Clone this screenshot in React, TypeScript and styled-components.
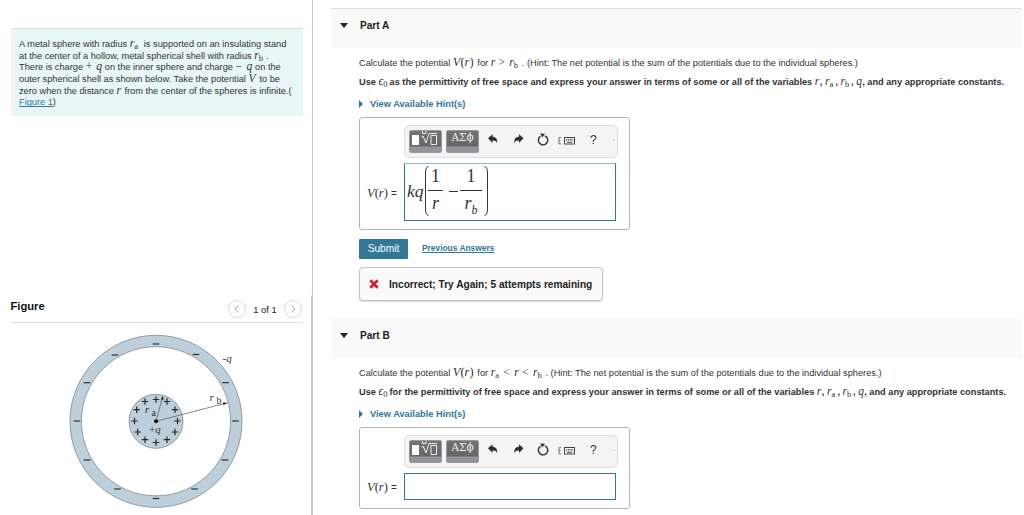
import React from "react";
import styled, { createGlobalStyle } from "styled-components";

const SERIF = '"Liberation Serif", serif';

const MINUSES = [
  [156, 54],
  [196, 64.5],
  [115, 65],
  [87, 92.7],
  [225.5, 92.7],
  [77, 131],
  [235.5, 131],
  [87, 170],
  [225, 170],
  [117.5, 199],
  [194.5, 199],
  [156, 208.5]
];

const PLUSES = [
  [156, 109.5],
  [145, 111.5],
  [167, 111.5],
  [136.7, 119.7],
  [175, 119.7],
  [134.5, 131],
  [177.5, 131],
  [137.7, 142],
  [175, 142],
  [145, 149.7],
  [167, 149.7],
  [156, 152.5]
];

const SphereFigure = () => (
  <svg width="312" height="192" viewBox="0 323 312 192">
    <g transform="translate(0 290)">
      <circle cx="156" cy="131.3" r="80.3" fill="none" stroke="#bccfdb" strokeWidth="11.6" />
      <circle cx="156" cy="131.3" r="86" fill="none" stroke="#8b9399" strokeWidth="0.9" />
      <circle cx="156" cy="131.3" r="74.6" fill="none" stroke="#8b9399" strokeWidth="0.9" />
      <circle cx="156" cy="131.3" r="27" fill="#bccfdb" stroke="#8b9399" strokeWidth="0.9" />
      {MINUSES.map(([x, y]) => (
        <path key={`${x}-${y}`} d={`M${x - 3.3} ${y}h6.6`} stroke="#2b2f33" strokeWidth="1.2" />
      ))}
      {PLUSES.map(([x, y]) => (
        <path
          key={`${x}-${y}`}
          d={`M${x - 3.2} ${y}h6.4M${x} ${y - 3.2}v6.4`}
          stroke="#22272b"
          strokeWidth="1.2"
        />
      ))}
      <path d="M156 131.3L224 113.6M156 131.3L162 109" stroke="#555" strokeWidth="0.7" />
      <path d="M228 112.7l-4.5 2.3-.6-2.6zM163 105.8l.6 4.2-2.8-.8z" fill="#222" />
      <circle cx="156" cy="131.3" r="2" fill="#111" />
      <g fontFamily={SERIF} fontSize="11" fill="#333">
        <text x="222.5" y="72" fontStyle="italic">-q</text>
        <text x="209.5" y="111" fontStyle="italic">r</text>
        <text x="216.5" y="113.5" fontSize="10">b</text>
        <text x="145" y="123" fontStyle="italic">r</text>
        <text x="151.5" y="126.3" fontSize="10">a</text>
        <text x="149" y="143">+<tspan fontStyle="italic">q</tspan></text>
      </g>
    </g>
  </svg>
);

const Toolbar = () => (
  <SToolbar>
    <SPaletteButton>
      <svg width="31" height="20" viewBox="0 0 31 20">
        <rect x="2" y="4" width="7" height="10" fill="#fff" />
        <path
          d="M11.5 6l1.5-1 3 7L19 2.5h8M12.5 0v2.500h3.500V0M21 4.500h5.500v9H21z"
          fill="none"
          stroke="#eee"
          strokeWidth="1"
        />
      </svg>
    </SPaletteButton>
    <SPaletteButton>
      <SGreek>ΑΣϕ</SGreek>
    </SPaletteButton>
    <STools width="136" height="28" viewBox="482 126 136 28">
      <path
        d="M488 138.2l4.5-4v2.5c3.2.1 5 2 4.6 6.5-.8-2.1-2-2.8-4.6-2.7v2.4z"
        fill="#2f2f2f"
      />
      <path
        d="M523.5 138.2l-4.5-4v2.5c-3.2.1-5 2-4.6 6.5.8-2.1 2-2.8 4.6-2.7v2.4z"
        fill="#2f2f2f"
      />
      <path d="M540.4 136.3a4.7 4.7 0 1 0 4.4-.5" fill="none" stroke="#2f2f2f" strokeWidth="1.4" />
      <path d="M540.3 133.4l4.8.4-3 3.8z" fill="#2f2f2f" />
      <path d="M561 137.5h-2v6.5h2M559 140.7h1.5" fill="none" stroke="#777" strokeWidth="1" />
      <rect x="564.5" y="137.5" width="10" height="6.5" fill="#fff" stroke="#444" strokeWidth="1" />
      <path
        d="M566 139.5h7.5M566 141h7.5"
        stroke="#444"
        strokeWidth="0.9"
        strokeDasharray="1.2 0.6"
      />
      <path d="M567 142.5h5" stroke="#444" strokeWidth="0.8" />
      <path d="M587.3 136h.8M613.3 140h.9" stroke="#999" strokeWidth="1" />
      <text x="590" y="144" fontFamily="Liberation Sans, sans-serif" fontSize="12" fill="#333">
        ?
      </text>
    </STools>
  </SToolbar>
);

type PartProps = {
  title: string;
  first?: boolean;
  question: React.ReactNode;
  instruction: React.ReactNode;
  answer?: React.ReactNode;
  children?: React.ReactNode;
};

const Part = (props: PartProps) => (
  <SPart>
    <SPartHeader $bordered={props.first}>
      <svg width="8" height="5" viewBox="0 0 8 5">
        <path d="M0 0h8L4 5z" fill="#222" />
      </svg>
      <span>{props.title}</span>
    </SPartHeader>
    <SPartBody>
      <SLine>{props.question}</SLine>
      <SInstruction>{props.instruction}</SInstruction>
      <SHint>
        <svg width="4" height="8" viewBox="0 0 4 8">
          <path d="M0 0l4 4-4 4z" fill="#317896" />
        </svg>
        <span>View Available Hint(s)</span>
      </SHint>
      <SAnswerBox $tall={!!props.answer}>
        <Toolbar />
        <SAnswerRow>
          <SLabel>
            <i>V</i>(<i>r</i>) <small>=</small>
          </SLabel>
          <SInput $tall={!!props.answer}>{props.answer}</SInput>
        </SAnswerRow>
      </SAnswerBox>
      {props.children}
    </SPartBody>
  </SPart>
);

const Ra = ({ w = 10 }: { w?: number }) => (
  <SMath $w={w}>
    <i>r</i>
    <sub>a</sub>
  </SMath>
);

const Rb = ({ w = 10 }: { w?: number }) => (
  <SMath $w={w}>
    <i>r</i>
    <sub>b</sub>
  </SMath>
);

const Vr = () => (
  <SMath $w={22} $size={12.5}>
    <i>V</i>(<i>r</i>)
  </SMath>
);

const Epsilon = () => (
  <SMath $w={8.5}>
    <i>ϵ</i>
    <sub>0</sub>
  </SMath>
);

const Variables = () => (
  <>
    <SMath $w={5}>
      <i>r</i>
    </SMath>
    , <Ra w={10.5} />, <Rb w={10.5} />,{" "}
    <SMath $w={6}>
      <i>q</i>
    </SMath>
    , and any appropriate constants.
  </>
);

const App = () => (
  <SPage>
    <GlobalStyle />
    <SSidebar>
      <SIntro>
        <SIntroLine>
          A metal sphere with radius <Ra w={9} />
          {"  "}is supported on an insulating stand
        </SIntroLine>
        <SIntroLine>
          at the center of a hollow, metal spherical shell with radius <Rb w={9.5} />
          {" "}.
        </SIntroLine>
        <SIntroLine>
          There is charge <SMath $w={8}>+</SMath>{" "}
          <SMath $w={6}>
            <i>q</i>
          </SMath>{" "}
          on the inner sphere and charge <SMath $w={8.5}>−</SMath>{" "}
          <SMath $w={6}>
            <i>q</i>
          </SMath>{" "}
          on the
        </SIntroLine>
        <SIntroLine>
          outer spherical shell as shown below. Take the potential{" "}
          <SMath $w={8.5}>
            <i>V</i>
          </SMath>{" "}
          to be
        </SIntroLine>
        <SIntroLine>
          zero when the distance{" "}
          <SMath $w={5.5}>
            <i>r</i>
          </SMath>{" "}
          from the center of the spheres is infinite.(
        </SIntroLine>
        <SIntroLine>
          <SLink>Figure 1</SLink>)
        </SIntroLine>
      </SIntro>
      <SFigurePanel>
        <SFigureHeader>
          <h2>Figure</h2>
          <SPager>
            <SPageButton>
              <svg width="6" height="8" viewBox="0 0 6 8">
                <path d="M4.5 .5L1 4l3.5 3.5" fill="none" stroke="#aaa" />
              </svg>
            </SPageButton>
            <span>1 of 1</span>
            <SPageButton>
              <svg width="6" height="8" viewBox="0 0 6 8">
                <path d="M1.5 .5L5 4 1.5 7.5" fill="none" stroke="#aaa" />
              </svg>
            </SPageButton>
          </SPager>
        </SFigureHeader>
        <SphereFigure />
      </SFigurePanel>
    </SSidebar>

    <SMain>
      <Part
        title="Part A"
        first
        question={
          <>
            Calculate the potential <Vr /> for{" "}
            <SMath $w={5}>
              <i>r</i>
            </SMath>{" "}
            <SMath $w={8.5}>&gt;</SMath> <Rb /> . (Hint: The net potential is the sum of the
            potentials due to the individual spheres.)
          </>
        }
        instruction={
          <>
            Use <Epsilon /> as the permittivity of free space and express your answer in terms of
            some or all of the variables <Variables />
          </>
        }
        answer={
          <SFormula>
            <i>kq</i>
            <SBracket width="4" height="52" viewBox="0 0 4 52">
              <path d="M3.5 1Q.5 2.5 .5 7v38q0 4.5 3 6" fill="none" stroke="#333" />
            </SBracket>
            <SFraction $w={15}>
              <span>1</span>
              <i>r</i>
            </SFraction>
            <SMinus />
            <SFraction $w={22}>
              <span>1</span>
              <i>
                r<sub>b</sub>
              </i>
            </SFraction>
            <SBracket $closing width="4" height="52" viewBox="0 0 4 52">
              <path d="M.5 1Q3.5 2.5 3.5 7v38q0 4.5-3 6" fill="none" stroke="#333" />
            </SBracket>
          </SFormula>
        }
      >
        <SActions>
          <SSubmit>Submit</SSubmit>
          <SPrevious>Previous Answers</SPrevious>
        </SActions>
        <SFeedback>
          <svg width="10" height="10" viewBox="0 0 10 10">
            <path d="M1.3 1.3l7.4 7.4M8.7 1.3L1.3 8.7" stroke="#cf2430" strokeWidth="2.9" />
          </svg>
          <span>Incorrect; Try Again; 5 attempts remaining</span>
        </SFeedback>
      </Part>

      <Part
        title="Part B"
        question={
          <>
            Calculate the potential <Vr /> for <Ra /> <SMath $w={8.5}>&lt;</SMath>{" "}
            <SMath $w={5}>
              <i>r</i>
            </SMath>{" "}
            <SMath $w={8.5}>&lt;</SMath> <Rb /> . (Hint: The net potential is the sum of the
            potentials due to the individual spheres.)
          </>
        }
        instruction={
          <>
            Use <Epsilon /> for the permittivity of free space and express your answer in terms of
            some or all of the variables <Variables />
          </>
        }
      />
    </SMain>
  </SPage>
);

export default App;

const GlobalStyle = createGlobalStyle`
  * {
    box-sizing: border-box;
  }

  body {
    margin: 0;
    background: #fff;
    color: #333;
    font-family: "Liberation Sans", Arial, sans-serif;
    overflow: hidden;
  }

  svg {
    display: block;
    flex-shrink: 0;
  }
`;

const SPage = styled.div`
  display: flex;
  width: 1024px;
  height: 515px;
  overflow: hidden;
`;

const SSidebar = styled.aside`
  display: flex;
  flex-direction: column;
  width: 313px;
  flex-shrink: 0;
  padding-top: 28px;
  border-right: 1px solid #b9cbe0;
`;

const SIntro = styled.div`
  width: 292px;
  height: 88px;
  margin-left: 11px;
  padding: 9px 0 0 8px;
  background: #e8f6f6;
  border-top: 1px solid #d8e4e4;
  flex-shrink: 0;
`;

const SIntroLine = styled.div`
  height: 11.7px;
  line-height: 12px;
  font-size: 9.22px;
  white-space: pre;
`;

const SLink = styled.a`
  color: #317896;
  text-decoration: underline;
`;

const SMath = styled.span<{ $w: number; $size?: number }>`
  display: inline-block;
  width: ${p => p.$w}px;
  height: 9px;
  line-height: 9px;
  font-family: ${SERIF};
  font-size: ${p => p.$size || 11.5}px;
  font-weight: normal;
  white-space: nowrap;

  sub {
    font-size: 8.5px;
    line-height: 0;
    vertical-align: -2px;
  }
`;

const SFigurePanel = styled.section`
  flex: 1;
  margin-top: 180px;
  border-right: 1px solid #b9cbe0;
`;

const SFigureHeader = styled.header`
  display: flex;
  justify-content: space-between;
  height: 27px;
  width: 291px;
  margin-left: 11px;
  border-bottom: 1px solid #dcdcdc;

  h2 {
    margin: 4px 0 0 -0.5px;
    color: #111;
    font-size: 11.2px;
    line-height: 13px;
  }
`;

const SPager = styled.div`
  display: flex;
  align-items: center;
  justify-content: space-between;
  width: 74px;
  height: 25px;
  font-size: 9.4px;
  color: #222;

  > span:nth-child(2) {
    padding-top: 2px;
  }
`;

const SPageButton = styled.span`
  display: flex;
  align-items: center;
  justify-content: center;
  width: 18px;
  height: 18px;
  border: 1px solid #d9d9d9;
  border-radius: 50%;
`;

const SMain = styled.main`
  flex: 1;
  min-width: 0;
  padding: 8px 2px 0 18px;
`;

const SPart = styled.section`
  margin-bottom: 18px;
`;

const SPartHeader = styled.header<{ $bordered?: boolean }>`
  display: flex;
  align-items: center;
  gap: 12px;
  height: ${p => (p.$bordered ? 40 : 39)}px;
  padding: 0 0 7px 9px;
  background: #f9f9f9;
  border-top: ${p => (p.$bordered ? "1px solid #ddd" : "0")};
  color: #222;
  font-size: 10.1px;
  font-weight: bold;
`;

const SPartBody = styled.div`
  padding: 9px 0 0 28px;
`;

const SLine = styled.div`
  height: 19px;
  line-height: 12px;
  font-size: 9.22px;
  white-space: nowrap;
`;

const SInstruction = styled(SLine)`
  height: 20px;
  font-weight: bold;
`;

const SHint = styled.div`
  display: flex;
  align-items: center;
  gap: 7px;
  height: 15px;
  margin-bottom: 6px;
  color: #317896;
  font-size: 9.25px;
  font-weight: bold;
`;

const SAnswerBox = styled.div<{ $tall: boolean }>`
  width: 271px;
  height: ${p => (p.$tall ? 113 : 82)}px;
  padding: 7px 0 0 7px;
  border: 1px solid #b5b5b5;
  border-radius: 3px;
`;

const SToolbar = styled.div`
  display: flex;
  gap: 4px;
  width: 214px;
  height: 33px;
  margin: 0 0 5px 37px;
  padding: 4px 0 0 4px;
  background: #f4f4f4;
  border: 1px solid #dedede;
  border-radius: 5px;
`;

const SPaletteButton = styled.div`
  width: 33px;
  height: 23px;
  flex-shrink: 0;
  border: 1px solid #999;
  border-radius: 2px;
  background: linear-gradient(#747474 0, #666 15px, #95949c 16px, #95949c 100%);
`;

const SGreek = styled.span`
  display: block;
  color: #eee;
  font-family: "DejaVu Serif", serif;
  font-size: 10.5px;
  line-height: 13px;
  text-align: center;
`;

const STools = styled.svg`
  margin-left: -1px;
  margin-top: -4px;
`;

const SAnswerRow = styled.div`
  display: flex;
  align-items: center;
`;

const SLabel = styled.span`
  width: 37px;
  padding-top: 2px;
  font-family: ${SERIF};
  font-size: 12.5px;
  white-space: nowrap;

  small {
    font-family: "Liberation Sans", sans-serif;
    font-size: 10px;
  }
`;

const SInput = styled.div<{ $tall: boolean }>`
  width: 212px;
  height: ${p => (p.$tall ? 58 : 27)}px;
  border: 1px solid #317896;
  border-top-color: ${p => (p.$tall ? "#8fbccb" : "#317896")};
  background: #fff;
`;

const SFormula = styled.div`
  display: flex;
  align-items: center;
  height: 54px;
  padding-left: 2px;
  font-family: ${SERIF};
  font-size: 18px;

  > i:first-child {
    width: 17px;
    font-size: 17.5px;
  }
`;

const SBracket = styled.svg<{ $closing?: boolean }>`
  margin-left: ${p => (p.$closing ? 2 : 1)}px;
  margin-right: -1px;
`;

const SFraction = styled.span<{ $w: number }>`
  display: grid;
  grid-template-rows: 27px 27px;
  justify-items: center;
  width: ${p => p.$w}px;
  line-height: 25px;
  background: linear-gradient(#333, #333) 0 26px / 100% 1px no-repeat;

  sub {
    font-size: 12px;
    line-height: 0;
    vertical-align: -5px;
  }
`;

const SMinus = styled.span`
  width: 9px;
  height: 1px;
  margin: 0 2px 0 6px;
  background: #333;
`;

const SActions = styled.div`
  display: flex;
  align-items: center;
  gap: 14px;
  margin: 9px 0 8px;
`;

const SSubmit = styled.button`
  width: 49px;
  height: 20px;
  padding: 0 0 1px;
  border: 0;
  border-radius: 1px;
  background: #317896;
  color: #fff;
  font: 10.2px "Liberation Sans", sans-serif;
`;

const SPrevious = styled.a`
  margin-top: -2px;
  color: #317896;
  font-size: 8.4px;
  font-weight: bold;
  text-decoration: underline;
`;

const SFeedback = styled.div`
  display: flex;
  align-items: center;
  gap: 10px;
  width: 244px;
  height: 34px;
  padding-left: 9px;
  background: #fafafa;
  border: 1px solid #c4c4c4;
  border-radius: 4px;
  box-shadow: 0 1px 1px rgba(0, 0, 0, 0.15);
  color: #222;
  font-size: 10.14px;
  font-weight: bold;
  white-space: nowrap;
`;
